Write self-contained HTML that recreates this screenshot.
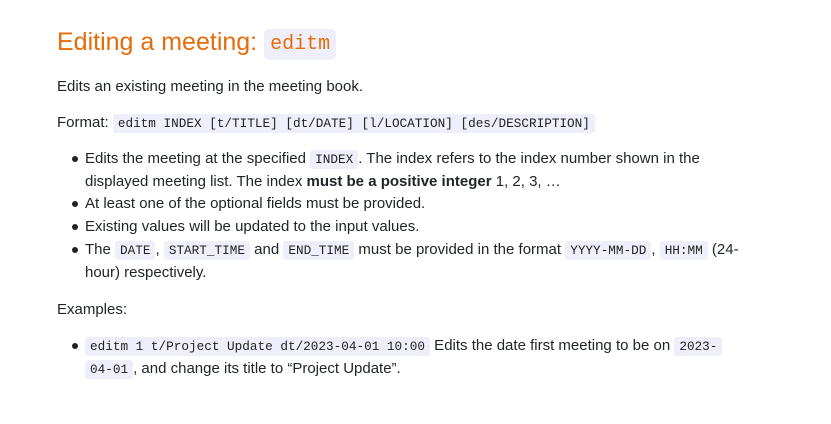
<!DOCTYPE html>
<html><head><meta charset="utf-8"><style>
body{margin:0;background:#fff;width:831px;height:424px;overflow:hidden;font-family:"Liberation Sans",sans-serif;font-size:15px;color:#212529;}
h1{position:absolute;left:57px;top:24px;margin:0;font-weight:normal;font-size:25px;color:#e46c0a;line-height:36px;white-space:nowrap;}
h1 code{font-size:20px;padding:4px 6px;border-radius:4px;color:#e46c0a;vertical-align:1px;}
code{font-family:"Liberation Mono",monospace;font-size:12.7px;background:#efeffb;padding:2px 5px;border-radius:3px;color:#222;}
.l{position:absolute;white-space:nowrap;line-height:23px;}
.d{position:absolute;width:6px;height:6px;border-radius:50%;background:#222;}
</style></head><body>
<h1>Editing a meeting: <code>editm</code></h1>
<div class="l" style="left:57px;top:75px">Edits an existing meeting in the meeting book.</div>
<div class="l" style="left:57px;top:111px">Format: <code>editm INDEX [t/TITLE] [dt/DATE] [l/LOCATION] [des/DESCRIPTION]</code></div>
<div class="d" style="left:72px;top:156px"></div>
<div class="l" style="left:85px;top:147px">Edits the meeting at the specified <code>INDEX</code>. The index refers to the index number shown in the</div>
<div class="l" style="left:85px;top:170px">displayed meeting list. The index <b>must be a positive integer</b> 1, 2, 3, …</div>
<div class="d" style="left:72px;top:201px"></div>
<div class="l" style="left:85px;top:192px">At least one of the optional fields must be provided.</div>
<div class="d" style="left:72px;top:224px"></div>
<div class="l" style="left:85px;top:215px">Existing values will be updated to the input values.</div>
<div class="d" style="left:72px;top:247px"></div>
<div class="l" style="left:85px;top:238px">The <code>DATE</code>, <code>START_TIME</code> and <code>END_TIME</code> must be provided in the format <code>YYYY-MM-DD</code>, <code>HH:MM</code> (24-</div>
<div class="l" style="left:85px;top:261px">hour) respectively.</div>
<div class="l" style="left:57px;top:298px">Examples:</div>
<div class="d" style="left:72px;top:343px"></div>
<div class="l" style="left:85px;top:334px"><code>editm 1 t/Project Update dt/2023-04-01 10:00</code> Edits the date first meeting to be on <code>2023-</code></div>
<div class="l" style="left:85px;top:357px"><code>04-01</code>, and change its title to “Project Update”.</div>
</body></html>
